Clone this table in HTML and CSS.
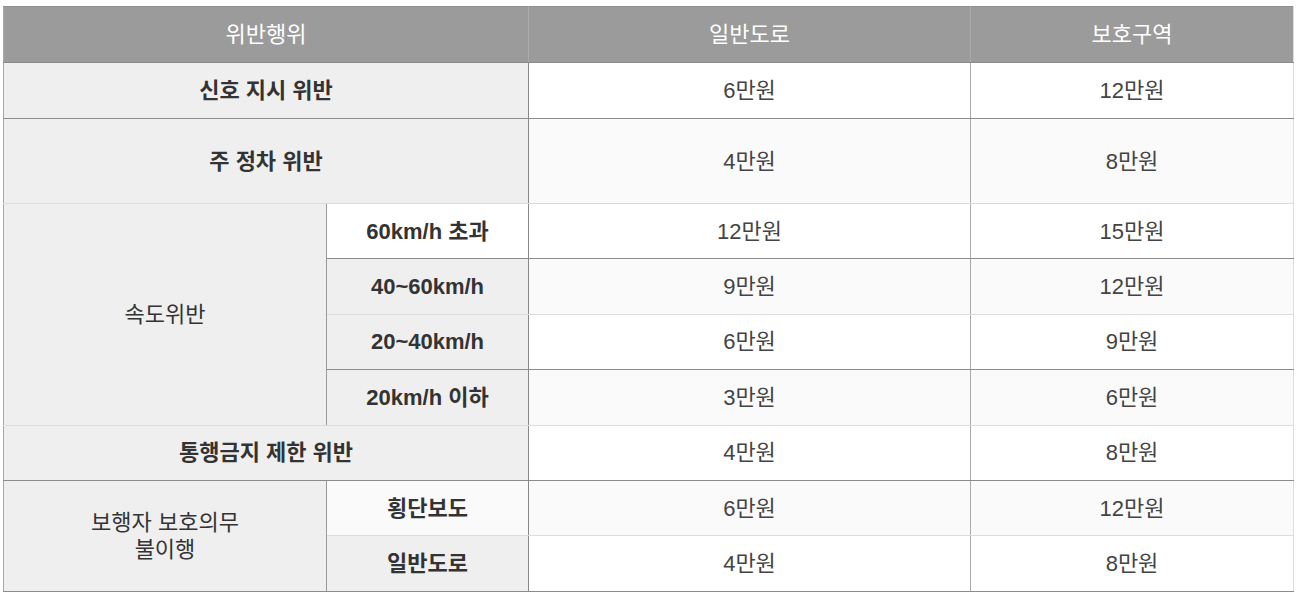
FILE: index.html
```html
<!DOCTYPE html>
<html lang="ko">
<head>
<meta charset="utf-8">
<title>위반행위 과태료</title>
<link rel="stylesheet" href="styles.css">
</head>
<body>
<div class="wrap">
<table class="fine">
  <colgroup>
    <col class="c1"><col class="c2"><col class="c3"><col class="c4">
  </colgroup>
  <thead>
    <tr class="top">
      <th colspan="2" class="h">위반행위</th>
      <th class="h">일반도로</th>
      <th class="h last">보호구역</th>
    </tr>
  </thead>
  <tbody>
    <tr class="odd top">
      <th colspan="2" class="cat">신호 지시 위반</th>
      <td class="mid">6만원</td>
      <td class="last">12만원</td>
    </tr>
    <tr class="even tall">
      <th colspan="2" class="cat">주 정차 위반</th>
      <td class="mid">4만원</td>
      <td class="last">8만원</td>
    </tr>
    <tr class="odd">
      <th rowspan="4" class="cat grp light">속도위반</th>
      <th class="sub white">60km/h 초과</th>
      <td class="mid">12만원</td>
      <td class="last">15만원</td>
    </tr>
    <tr class="even">
      <th class="sub">40~60km/h</th>
      <td class="mid">9만원</td>
      <td class="last">12만원</td>
    </tr>
    <tr class="odd">
      <th class="sub">20~40km/h</th>
      <td class="mid">6만원</td>
      <td class="last">9만원</td>
    </tr>
    <tr class="even">
      <th class="sub">20km/h 이하</th>
      <td class="mid">3만원</td>
      <td class="last">6만원</td>
    </tr>
    <tr class="odd">
      <th colspan="2" class="cat">통행금지 제한 위반</th>
      <td class="mid">4만원</td>
      <td class="last">8만원</td>
    </tr>
    <tr class="even">
      <th rowspan="2" class="cat grp dark">보행자 보호의무<br>불이행</th>
      <th class="sub soft">횡단보도</th>
      <td class="mid">6만원</td>
      <td class="last">12만원</td>
    </tr>
    <tr class="odd">
      <th class="sub">일반도로</th>
      <td class="mid">4만원</td>
      <td class="last">8만원</td>
    </tr>
  </tbody>
</table>
</div>
</body>
</html>
```
FILE: styles.css
```css
html, body {
  margin: 0;
  padding: 0;
  background: #ffffff;
}

.wrap {
  padding: 6px 0 0 3px;
}

.fine {
  width: 1291px;
  border-collapse: collapse;
  table-layout: fixed;
  font-family: "Liberation Sans", "Noto Sans CJK KR", sans-serif;
  font-size: 22px;
  color: #333333;
  border-left: 1px solid #a8a8a8;
  border-right: 1px solid #dddddd;
}

.c1 { width: 323px; }
.c2 { width: 202px; }
.c3 { width: 442px; }
.c4 { width: 323px; }

.fine th,
.fine td {
  padding: 0 8px;
  text-align: center;
  vertical-align: middle;
  line-height: 27px;
}

.fine tr { height: 55.4px; }
.fine tr.top { height: 56px; }
.fine tr.tall { height: 85px; }

.fine th.h {
  background: #9b9b9b;
  color: #ffffff;
  font-weight: normal;
  border-top: 1px solid #909090;
  border-bottom: 1px solid #8a8a8a;
  border-right: 1px solid #ababab;
}

.fine th.h.last { border-right: 1px solid #dddddd; }

.fine th.cat {
  background: #efefef;
  font-weight: bold;
  color: #333333;
  border-right: 1px solid #888888;
}

.fine th.grp { font-weight: normal; border-right: 1px solid #999999; }

.fine th.sub {
  background: #efefef;
  font-weight: bold;
  color: #333333;
  border-right: 1px solid #888888;
}

.fine th.sub.white { background: #ffffff; }
.fine th.sub.soft { background: #fafafa; }

.fine td {
  color: #444444;
}

.fine td.mid { border-right: 1px solid #aaaaaa; }

.fine tr.odd > * { border-bottom: 1px solid #8c8c8c; }
.fine tr.even > * { border-bottom: 1px solid #dcdcdc; }
.fine th.grp.light { border-bottom: 1px solid #dcdcdc; }
.fine th.grp.dark { border-bottom: 1px solid #8c8c8c; }

.fine tr.odd > td { background: #ffffff; }
.fine tr.even > td { background: #fafafa; }
```
